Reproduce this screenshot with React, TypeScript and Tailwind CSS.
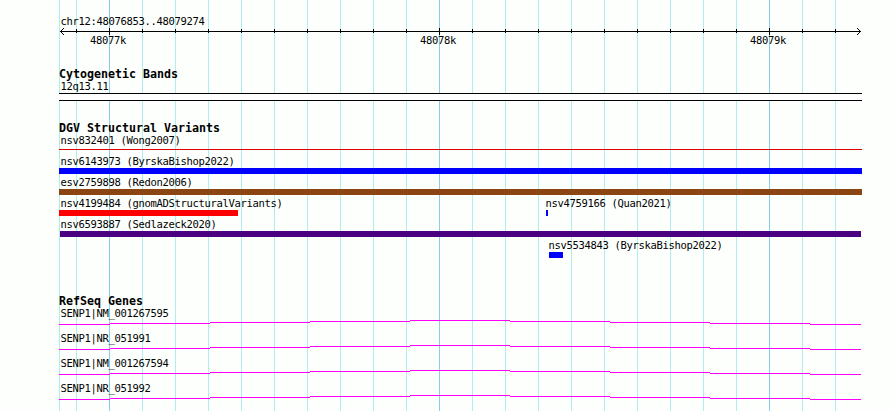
import React from 'react';

type Feature = { name: string; x: number; w: number; color: string; labelX?: number; thin?: boolean };

// x and w are in pixels from the left edge of the panel
const variants: Feature[][] = [
  [{ name: 'nsv832401 (Wong2007)', x: 0, w: 803, color: 'bg-[#e00000]', thin: true }],
  [{ name: 'nsv6143973 (ByrskaBishop2022)', x: 0, w: 803, color: 'bg-[#0000ff]' }],
  [{ name: 'esv2759898 (Redon2006)', x: 0, w: 803, color: 'bg-[#8b4513]' }],
  [
    { name: 'nsv4199484 (gnomADStructuralVariants)', x: 0, w: 179, color: 'bg-[#ff0000]' },
    { name: 'nsv4759166 (Quan2021)', x: 487, w: 2, color: 'bg-[#0000ff]', labelX: -2 },
  ],
  [{ name: 'nsv6593887 (Sedlazeck2020)', x: 1, w: 801, color: 'bg-[#4b0082]', labelX: -1 }],
  [{ name: 'nsv5534843 (ByrskaBishop2022)', x: 490, w: 14, color: 'bg-[#0000ff]', labelX: -2 }],
];

const genes = ['SENP1|NM_001267595', 'SENP1|NR_051991', 'SENP1|NM_001267594', 'SENP1|NR_051992'];

const ticks = Array.from({ length: 24 }, (_, i) => 17 + i * 33);
const isMajor = (x: number) => (x - 50) % 330 === 0;

function Grid() {
  return (
    <svg className="absolute left-[59px] top-0" width="803" height="411" shapeRendering="crispEdges">
      <rect x="0" y="0" width="1" height="411" fill="#afeeee" />
      {ticks.map(x => (
        <rect key={x} x={x} y="0" width="1" height="411" fill={isMajor(x) ? '#87ceeb' : '#afeeee'} />
      ))}
    </svg>
  );
}

function Ruler() {
  return (
    <svg className="block overflow-visible" width="803" height="5" shapeRendering="crispEdges">
      <rect x="1" y="3" width="801" height="1" />
      {[1, 2, 3].map(d => (
        <g key={d}>
          <rect x={1 + d} y={3 - d} width="1" height="1" />
          <rect x={1 + d} y={3 + d} width="1" height="1" />
          <rect x={801 - d} y={3 - d} width="1" height="1" />
          <rect x={801 - d} y={3 + d} width="1" height="1" />
        </g>
      ))}
      {ticks.map(x => (
        <rect key={x} x={x} y={isMajor(x) ? 0 : 1} width="1" height={isMajor(x) ? 7 : 4} />
      ))}
    </svg>
  );
}

function Label({ children }: { children: React.ReactNode }) {
  return <div className="h-[14px] pl-[1.5px] leading-[14px] whitespace-nowrap">{children}</div>;
}

function Heading({ children }: { children: React.ReactNode }) {
  return (
    <h2 className="h-3 text-[11.63px] leading-[14px] font-bold tracking-normal whitespace-nowrap">
      {children}
    </h2>
  );
}

function VariantRow({ features }: { features: Feature[] }) {
  return (
    <div className="grid h-[21px]">
      {features.map(f => (
        <div key={f.name} className="col-start-1 row-start-1" style={{ marginLeft: f.x }}>
          <div style={{ marginLeft: f.labelX }}>
            <Label>{f.name}</Label>
          </div>
          <div className={f.thin ? `mt-[2px] h-px ${f.color}` : `h-[6px] ${f.color}`} style={{ width: f.w }} />
        </div>
      ))}
    </div>
  );
}

function GeneRow({ name }: { name: string }) {
  return (
    <div className="h-[25px]">
      <Label>{name}</Label>
      <svg className="block" width="803" height="5" fill="#ff00ff" shapeRendering="crispEdges">
        <rect x="0" y="4" width="51" height="1" />
        {[3, 2, 1, 0, 1, 2, 3].map((y, i) => (
          <rect key={i} x={51 + i * 100} y={y} width="100" height="1" />
        ))}
        <rect x="751" y="4" width="51" height="1" />
      </svg>
    </div>
  );
}

export default function App() {
  return (
    <div className="relative h-[411px] w-[890px] overflow-hidden bg-[#fdfffc] font-['DejaVu_Sans_Mono',monospace] text-[10.5px] tracking-[-0.32px] text-black">
      <Grid />
      <main className="relative ml-[59px] w-[803px] pt-[14px]">
        <section className="h-[53px]">
          <Label>chr12:48076853..48079274</Label>
          <Ruler />
          <div className="flex pl-[31px] leading-[14px]">
            <span className="w-[330px]">48077k</span>
            <span className="w-[330px]">48078k</span>
            <span>48079k</span>
          </div>
        </section>
        <section className="h-[54px]">
          <Heading>Cytogenetic Bands</Heading>
          <Label>12q13.11</Label>
          <div className="h-2 border-y border-black bg-white" />
        </section>
        <section className="h-[173px]">
          <Heading>DGV Structural Variants</Heading>
          {variants.map(row => (
            <VariantRow key={row[0].name} features={row} />
          ))}
        </section>
        <section>
          <Heading>RefSeq Genes</Heading>
          {genes.map(g => (
            <GeneRow key={g} name={g} />
          ))}
        </section>
      </main>
    </div>
  );
}
